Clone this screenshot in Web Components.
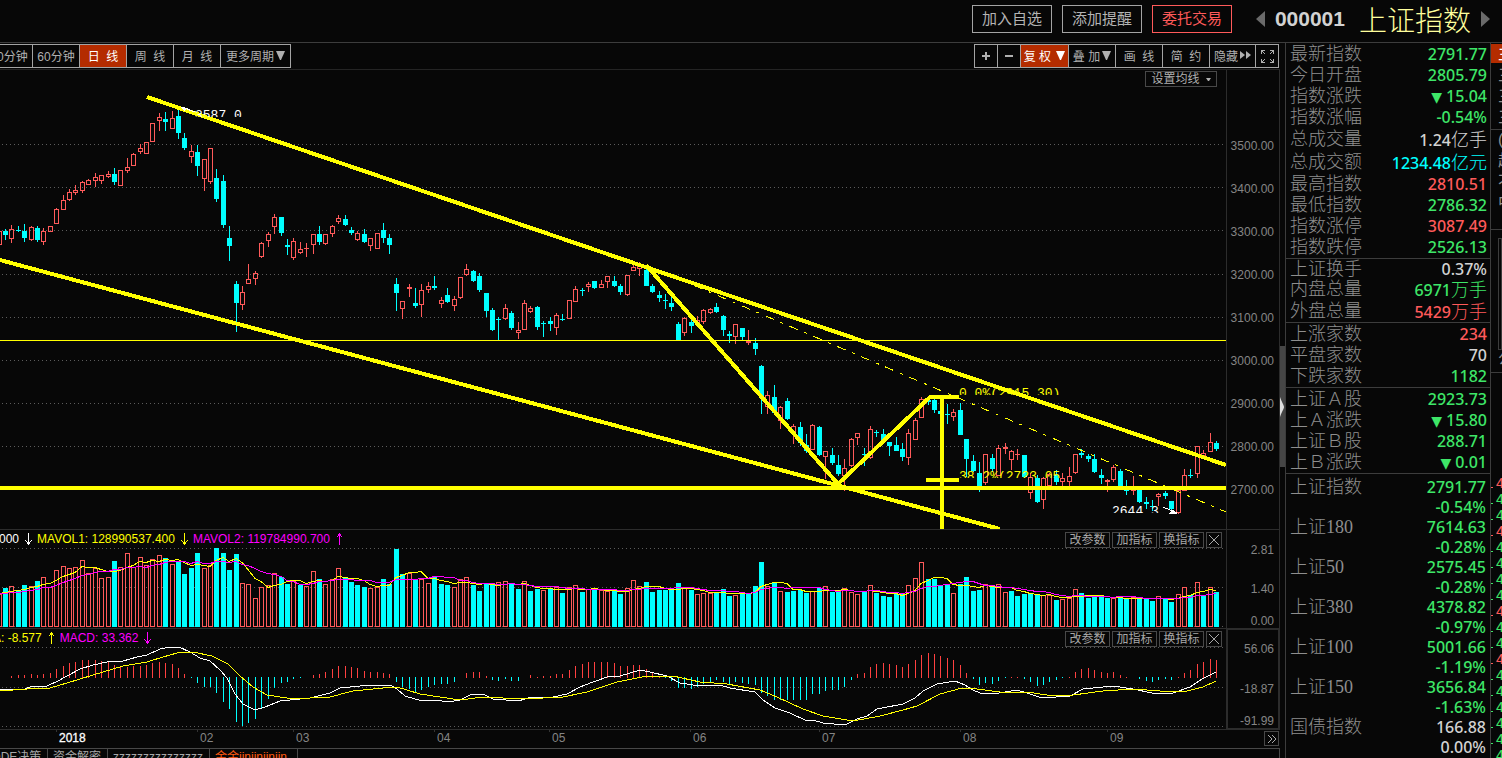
<!DOCTYPE html>
<html lang="zh-CN">
<head>
<meta charset="utf-8">
<title>上证指数 000001</title>
<style>
html,body{margin:0;height:100%;background:#070707}
body{overflow:hidden;font-family:"Liberation Sans","Noto Sans CJK SC",sans-serif}
</style>
</head>
<body>
<stock-terminal></stock-terminal>
<script>
const BASE = `*{box-sizing:border-box}
button{font:inherit;color:inherit;background:none;margin:0;padding:0;border:0;white-space:nowrap;cursor:pointer}
a{color:inherit;text-decoration:none}svg{display:block}`;

function define(name, css, html, setup) {
  const tpl = document.createElement('template');
  customElements.define(name, class extends HTMLElement {
    constructor() {
      super();
      tpl.innerHTML = `<style>${BASE}${css}</style>${typeof html === 'function' ? html(this) : html}`;
      this.attachShadow({mode: 'open'}).appendChild(tpl.content.cloneNode(true));
      if (setup) setup(this.shadowRoot, this);
    }
  });
}

/* candles: colour, high, body top, body bottom, low */
const CANDLES = `r231,231,245,245 c229,231,235,240 r225,229,239,243 c226,230,231,232 c224,231,238,242 r226,227,240,241 c226,228,240,242 r228,231,242,245 r226,226,232,232 r208,209,224,224
r195,200,210,210 r189,192,200,201 r185,190,193,195 r181,182,191,193 r179,180,185,185 r173,177,181,187 r175,175,181,184 r171,174,177,178 c168,174,182,185 r170,170,186,186
r158,167,171,173 r153,154,166,166 r144,148,152,154 r142,142,154,154 r123,123,142,142 r113,117,121,131 c112,119,122,131 r111,118,129,129 c109,116,133,139 c133,138,148,150
r145,151,157,163 c145,152,166,176 r159,159,179,191 r148,148,182,184 c169,178,199,202 c175,181,225,228 c226,238,246,261 c281,284,303,332 r286,292,305,310 r264,279,284,284
r271,273,279,285 r242,243,257,258 r232,234,241,247 r214,217,227,234 c217,217,233,236 c239,245,247,255 r238,241,258,260 r242,249,253,254 r243,248,249,257 r234,234,245,254
c226,234,242,245 r234,234,244,245 r225,226,234,237 r215,218,222,224 c215,219,225,226 c227,230,233,235 r231,233,240,241 c229,234,242,243 r238,238,246,251 r233,233,249,249
c223,230,238,243 c234,238,245,254 c278,284,293,311 r301,301,309,319 r284,287,289,297 c288,303,306,308 r284,290,305,317 r282,286,290,293 c276,286,288,290 r297,300,304,308
c288,295,302,303 r296,299,306,311 r277,277,298,299 r264,269,275,276 c270,271,281,282 c273,276,290,292 c293,293,311,317 c308,310,330,331 c317,319,320,340 r304,308,319,320
c311,313,328,330 r322,330,333,339 r300,303,330,330 r306,308,312,313 c306,307,327,330 c321,323,324,337 c317,321,324,331 r313,315,328,335 c314,319,320,321 r300,300,319,319
r286,289,302,302 c288,290,291,296 r282,284,287,292 c281,281,288,289 r280,284,288,288 r276,276,282,288 c276,281,286,287 c284,286,292,295 r275,275,295,296 r262,267,271,271
r262,266,269,276 c266,270,286,286 c284,286,292,293 c291,295,298,302 c294,300,301,309 c296,303,307,311 c322,324,340,340 r317,318,333,336 c318,322,326,333 r316,320,324,324
r309,310,322,324 r308,309,313,314 c303,307,312,313 c315,316,330,336 c331,334,336,343 r324,324,337,344 c328,328,337,340 r330,341,343,345 c338,343,349,355 c365,366,398,414
r391,395,407,414 c385,397,413,413 r406,407,421,429 c398,401,419,420 r424,426,433,444 c422,427,443,446 c434,445,451,453 r424,425,450,450 c426,427,455,456 r451,451,457,479
c448,455,463,465 c455,465,474,476 r459,468,476,491 r438,439,466,467 r433,433,438,445 c448,454,455,466 r426,429,458,459 c430,432,433,437 c429,434,441,442 c442,442,446,456
c437,445,451,451 c443,449,457,461 r429,433,458,465 r418,420,440,440 r397,399,418,418 c397,400,402,405 c399,400,410,413 c403,411,414,414 c404,414,415,424 r409,412,417,421
c403,410,435,435 c439,439,459,477 c455,461,471,472 c462,473,486,492 r454,454,483,485 c454,458,469,472 r445,448,476,476 r443,447,449,454 r450,451,460,470 r449,454,455,460
c455,455,477,478 r473,477,493,499 c475,478,502,503 r477,478,500,509 r473,474,486,486 c470,475,482,485 r473,478,482,487 r467,476,482,486 r454,454,473,474 c449,453,455,458
c454,456,459,462 c454,459,472,473 c469,475,478,484 r479,480,482,492 r465,467,480,482 c469,471,486,487 c480,486,491,495 r476,490,491,495 c490,490,502,503 c497,502,504,509
c500,506,507,511 r493,494,497,506 c491,493,496,499 c501,501,509,511 r490,490,513,514 r469,475,491,491 c469,475,476,478 r446,446,474,478 r450,453,456,457 r433,442,452,452 c441,443,449,451`.split(/\s+/);

/* volume bar tops on a base of 626 */
const VOLUME = `594r 588c 586r 591c 585c 586r 581c 577r 587r 570r 566r 568r 567r 560r 573r 568r 578r 577r 561c 567r 553r 567r 557r 565r 559r 555r 558c 564r 561c 574c
568c 553c 568r 565r 548c 553c 570c 554c 583r 584r 598r 587r 585r 573r 577c 584c 581r 585c 586r 571r 579c 584r 579r 568r 577c 582c 585c 587c 588r 587r
579c 584c 549c 574c 573r 580c 579r 583r 576c 584c 585c 587r 579r 577r 585c 591c 584c 584c 582r 581r 584c 589c 581r 591c 589c 590r 588c 587r 593c 587r
585r 592c 589r 589c 590r 591r 590c 594c 588r 580r 586r 582c 592c 590c 590c 589c 583c 588r 590c 594r 593r 593r 592c 589c 596c 595r 592c 593c 586c 562c
586r 583c 591r 592c 591c 590c 593c 591r 588c 586r 592c 591c 588r 592r 594r 592c 585r 593c 596c 597c 594c 594c 585r 578r 562r 579c 579c 586c 584c 593r
584c 577c 591c 590c 584r 586c 584r 592r 591c 596c 594c 593c 595c 595r 595r 600c 599r 598r 589r 593c 598c 596c 597c 598c 598r 597c 599c 597r 597c 598c
601c 596r 599c 602c 594r 587r 595c 582r 595c 587r 592c`.split(/\s+/);

const HIST = [0,0,2,3,3,4,3,4,5,9,12,15,16,18,18,18,17,16,13,12,11,12,12,13,15,16,15,14,10,4,-1,-6,-10,-10,-16,-25,-32,-45,-49,-46,-42,-31,-22,-11,-6,-5,-2,-1,0,3,4,6,9,12,12,11,10,7,6,6,5,4,-5,-10,-12,-15,-13,-10,-8,-7,-7,-5,0,5,6,6,2,-3,-4,-2,-4,-4,0,3,1,2,2,4,4,8,12,14,16,16,16,16,15,12,12,13,13,9,5,2,-1,-4,-11,-11,-12,-10,-7,-5,-3,-5,-7,-5,-6,-7,-8,-16,-19,-23,-23,-23,-23,-23,-23,-17,-17,-14,-13,-13,-10,-3,4,5,11,14,15,14,13,11,14,18,23,25,24,22,20,18,13,5,-2,-8,-6,-7,-4,-1,1,1,-2,-5,-9,-8,-5,-3,-1,1,6,9,10,8,6,5,6,3,1,0,-2,-4,-5,-3,-2,-3,1,5,8,14,16,19,18];

const DIF = '0,690 25,689 30,687 47,686 58,681 67,676 80,669 93,665 107,662 123,661 137,657 147,655 160,649 170,647 179,647 190,652 200,658 210,661 220,670 227,678 235,694 243,704 255,710 265,707 280,701 310,698 330,693 340,688 360,686 390,685 397,689 405,696 422,701 435,700 448,702 460,700 470,695 483,694 493,699 518,701 532,697 553,697 567,694 580,687 593,682 610,676 620,676 640,670 650,672 667,676 680,683 700,686 720,685 730,688 755,692 763,700 775,708 790,713 807,721 813,720 823,723 845,725 857,719 867,716 877,709 903,704 915,698 923,691 937,684 955,681 965,685 973,690 980,693 993,694 1017,690 1027,693 1042,698 1070,696 1083,689 1113,686 1133,689 1152,693 1173,693 1190,687 1202,679 1216,672';
const DEA = '0,691 27,689 50,688 67,683 80,679 103,672 123,666 147,662 163,657 177,653 193,652 212,656 228,664 240,676 253,687 267,695 287,698 310,698 330,697 353,691 383,688 397,687 420,694 460,700 483,697 523,699 563,697 587,692 617,682 647,676 673,676 700,682 727,684 760,690 777,697 803,709 823,716 853,721 880,716 903,710 917,706 940,694 962,688 977,689 1000,692 1027,692 1047,695 1073,695 1103,691 1133,689 1160,691 1187,691 1203,687 1216,681';

const RED = '#ff5a5a', CYAN = '#00ffff';
const xAt = k => Math.round(5 + 6.4074 * (k - 1));
const grid = ys => ys.map(y => `<path d="M2 ${y}.5H1226" stroke="#5c5c5c" stroke-dasharray="1 3"/>`).join('');
const plot = (top, h, body) => `<svg viewBox="0 ${top} 1226 ${h}" preserveAspectRatio="xMaxYMin slice" width="100%" height="${h}" fill="none" shape-rendering="crispEdges">${body}</svg>`;
const arrow = up => `<svg width="7" height="12" viewBox="0 0 7 12" fill="none" stroke="currentColor" shape-rendering="crispEdges"><path d="${up ? 'M3.5 1V12M.5 4.5L3.5 1 6.5 4.5' : 'M3.5 0V11M.5 7.5L3.5 11 6.5 7.5'}"/></svg>`;

define('app-header', `
:host{display:flex;align-items:center;justify-content:flex-end;height:43px;padding:0 12px 5px 0;border-bottom:1px solid #3c3c3c}
.acts{display:flex;gap:10px}
.acts button{width:80px;height:28px;border:1px solid #a4a4a4;color:#b4b4b4;font-size:15px;line-height:24px}
.acts .trade{border-color:${RED};color:${RED}}
.nav{margin-left:24px}.nav+.code{margin-left:10px}
.code{font-size:21px;font-weight:700;color:#d2d2d2}
.name{font-size:28px;line-height:36px;margin:0 10px 0 14px;color:#ffff9c;font-weight:300;font-family:"Noto Sans CJK SC",sans-serif}
.next{margin:0}`,
`<div class="acts"><button>加入自选</button><button>添加提醒</button><button class="trade">委托交易</button></div>
<button class="nav" aria-label="上一个"><svg width="9" height="16" viewBox="0 0 9 16"><path d="M9 0V16L0 8Z" fill="#6a6a6a"/></svg></button>
<span class="code">000001</span><span class="name">上证指数</span>
<button class="next" aria-label="下一个"><svg width="9" height="16" viewBox="0 0 9 16"><path d="M0 0V16L9 8Z" fill="#6a6a6a"/></svg></button>`);

const tri = `<svg class="t" width="9" height="9" viewBox="0 0 9 9"><path d="M0 0H9L5 9H4Z" fill="currentColor"/></svg>`;
define('chart-toolbar', `
:host{display:flex;justify-content:space-between;height:27px;padding:1px 0;border-bottom:1px solid #242424;color:#b0b0b0;font-size:12px}
div{display:flex}
button{display:flex;align-items:center;justify-content:center;gap:2px;height:24px;width:47px;padding-bottom:2px;border:1px solid #a4a4a4;border-left-width:0;white-space:pre}
.left button:first-child{margin-left:-14px}
.left button:last-child{width:70px}
.on{background:#b42c00;color:#fff}
.right{margin-right:1px}
.right button:first-child{border-left-width:1px;width:24px}
button.s{width:23px}button.w{width:48px}button.n{width:46px}
button.i{padding-bottom:0}`,
`<div class="left"><button>30分钟</button><button>60分钟</button><button class="on">日  线</button><button>周  线</button><button>月  线</button><button>更多周期${tri}</button></div>
<div class="right"><button class="i" aria-label="放大"><svg width="8" height="8" viewBox="0 0 8 8" shape-rendering="crispEdges"><path d="M3 0h2v3H8v2H5V8h-2V5H0v-2h3z" fill="currentColor"/></svg></button>
<button class="s i" aria-label="缩小"><svg width="8" height="2" viewBox="0 0 8 2"><path d="M0 0H8V2H0Z" fill="currentColor"/></svg></button>
<button class="on w">复 权 ${tri}</button><button>叠 加${tri}</button><button>画  线</button><button>简  约</button>
<button class="n">隐藏<svg width="11" height="8" viewBox="0 0 11 8"><path d="M0 0L5 4 0 8ZM6 0L11 4 6 8Z" fill="currentColor"/></svg></button>
<button class="s i" aria-label="全屏"><svg width="13" height="13" viewBox="0 0 13 13" fill="none" stroke="currentColor" shape-rendering="crispEdges"><path d="M.5 4V.5H4M.5 .5L4 4M9 .5H12.500V4M12.500 .5L9 4M.5 9V12.500H4M.5 12.500L4 9M12.500 9V12.500H9M12.500 12.500L9 9"/></svg></button></div>`);

define('chart-pane', `
:host{display:flex;border-bottom:1px solid #2c2c2c;position:relative}
.plot{flex:1;min-width:0;overflow:hidden}
.axis{width:54px;border-left:1px solid #2c2c2c;border-right:1px solid #2c2c2c;color:#858585;font-size:12px}
.head,.acts{position:absolute;top:2px}
.head{left:0}.acts{right:58px}`,
`<div class="plot"><slot></slot></div><div class="axis"><slot name="axis"></slot></div>
<div class="head"><slot name="head"></slot></div><div class="acts"><slot name="acts"></slot></div>`);

define('axis-labels', `
:host{display:block;text-align:right;padding-right:5px}
span{display:block}`, '', (root, el) => {
  el.getAttribute('values').split(' ').forEach(v => {
    const [text, h] = v.split('|'), s = document.createElement('span');
    s.textContent = text; s.style.cssText = `height:${h}px;line-height:${h}px`;
    root.appendChild(s);
  });
});

define('pane-actions', `
:host{display:flex;gap:2px;font-size:12px;color:#a8a8a8}
button{width:45px;height:16px;border:1px solid #484848;line-height:12px}
.x{width:16px;display:grid;place-items:center}`,
`<button>改参数</button><button>加指标</button><button>换指标</button><button class="x" aria-label="关闭"><svg width="10" height="10" viewBox="0 0 10 10" stroke="currentColor" shape-rendering="crispEdges"><path d="M0 0L10 10M10 0L0 10"/></svg></button>`);

define('ma-button', `
:host{display:block}
button{display:flex;align-items:center;justify-content:center;gap:6px;width:72px;height:16px;border:1px solid #484848;color:#b0b0b0;font-size:12px;line-height:12px}`,
`<button>设置均线<svg width="5" height="3" viewBox="0 0 5 3"><path d="M0 0H5L3 3H2Z" fill="currentColor"/></svg></button>`);

define('price-plot', `:host{display:block}text{font:13px "Liberation Mono",monospace}`, () => {
  const candles = CANDLES.map((s, k) => {
    const x = xAt(k), [h, t, b, l] = s.slice(1).split(',').map(Number);
    if (s[0] === 'c') return `<path d="M${x}.5 ${h}V${l}" stroke="${CYAN}"/><rect x="${x - 2}" y="${t}" width="5" height="${b - t}" fill="${CYAN}"/>`;
    const body = b - t < 3 ? `<rect x="${x - 2}" y="${t}" width="5" height="${b - t}" fill="${RED}"/>` : `<rect x="${x - 1.5}" y="${t + .5}" width="4" height="${b - t - 1}" stroke="${RED}"/>`;
    return `<path d="M${x + .5} ${h}V${t}M${x + .5} ${b}V${l}" stroke="${RED}"/>${body}`;
  }).join('');
  return plot(70, 459, `
  <defs><clipPath id="cut"><path d="M180 109H260V117H180ZM950 387H1070V395H950ZM950 470H1070V478H950ZM1100 506H1165V513H1100Z"/></clipPath></defs>
  ${grid([144, 187, 230, 274, 317, 360, 403, 446, 489])}${candles}
  <g stroke="#ffff00" stroke-width="4"><path d="M147 97L1226 465M0 260L1000 529M0 488H1226M646 265L838 484 930 397H959M926 480H959M942 397V529"/></g>
  <g stroke="#ffff00"><path d="M0 340.500H1226"/><path d="M646 265L1226 512" stroke-dasharray="9 7 3 7"/></g>
  <g clip-path="url(#cut)"><text x="195" y="119" fill="#fff">3587.0</text><text x="959" y="397" fill="#ff0">0.0%(2915.30)</text><text x="959" y="480" fill="#ff0">38.2%(2723.05</text><text x="1112" y="515" fill="#fff">2644.3</text></g>
  <path d="M181 107L195 112M1163 507L1177 513" stroke="#fff"/><path d="M181 107L189 108 184 111ZM1177 514L1169 514 1173 509Z" fill="#fff"/>`);
});

define('volume-plot', ':host{display:block}', () => {
  const tops = VOLUME.map(v => parseInt(v));
  const bars = VOLUME.map((v, k) => {
    const x = xAt(k), t = tops[k];
    return v.endsWith('c') ? `<rect x="${x - 2}" y="${t}" width="5" height="${627 - t}" fill="${CYAN}"/>` : `<path d="M${x - 2 + .5} ${t}.5h4V626.5h-4Z" stroke="${RED}"/>`;
  }).join('');
  const ma = n => tops.map((_, k) => {
    let s = 0;
    for (let j = k - n + 1; j <= k; j++) s += j < 0 ? 593 : tops[j];
    return `${xAt(k)},${Math.round(s / n) + .5}`;
  }).join(' ');
  return plot(530, 98, `${grid([548, 587, 626])}${bars}<polyline points="${ma(5)}" stroke="#ff0"/><polyline points="${ma(10)}" stroke="#f0f"/>`);
});

define('macd-plot', ':host{display:block}', () => {
  const bars = HIST.map((v, k) => v ? `<rect x="${xAt(k)}" y="${v > 0 ? 678 - v : 677}" width="1" height="${Math.abs(v)}" fill="${v > 0 ? '#ff4040' : CYAN}"/>` : '').join('');
  return plot(629, 100, `${grid([647, 687, 726])}${bars}<polyline points="${DIF}" stroke="#fff"/><polyline points="${DEA}" stroke="#ff0"/>`);
});

define('legend-line', `
:host{display:flex;align-items:center;gap:5px;height:14px;margin-left:-1px;font-size:12px;white-space:pre}
:host([cut]){margin-left:-7px}
span{display:flex;align-items:center;gap:6px}`, el => {
  const cols = {w: '#fff', y: '#ff0', m: '#f0f'};
  return el.getAttribute('items').split('|').map(s => `<span style="color:${cols[s[0]]}">${s.slice(2)}${arrow(s[1] === '+')}</span>`).join('');
});

define('time-axis', `
:host{display:flex;height:18px}
.plot{flex:1;min-width:0}
.end{width:54px;display:flex;justify-content:flex-end;align-items:flex-start;padding:1px 1px 0 0}
button{width:15px;height:15px;border:1px solid #484848;color:#aaa;display:grid;place-items:center}
text{font:12px "Liberation Sans",sans-serif;fill:#858585}`, () => {
  const marks = [[56, '2018'], [197, '02'], [293, '03'], [434, '04'], [549, '05'], [690, '06'], [819, '07'], [960, '08'], [1107, '09']];
  return `<div class="plot">${plot(730, 18, marks.map(([x, t], k) => `<path d="M${x}.5 730V732" stroke="#333"/><text x="${x + 3}" y="742"${k ? '' : ' style="fill:#fff;stroke:#fff;stroke-width:.3"'}>${t}</text>`).join(''))}</div>
  <div class="end"><button aria-label="更多"><svg width="8" height="8" viewBox="0 0 8 8" fill="none" stroke="currentColor"><path d="M0 0L4 4 0 8M4 0L8 4 4 8"/></svg></button></div>`;
});

define('bottom-tabs', `
:host{display:flex;flex:1;min-height:10px;overflow:hidden;border:1px solid #484848;border-width:1px 1px 0 0;font-size:12px;color:#a8a8a8}
a{height:20px;line-height:16px;padding:0 5px;border-right:1px solid #484848;white-space:nowrap}
.first{width:56px;margin-left:-8px;padding:0}.two{width:60px}.three{width:102px}.hot{width:88px;color:#ff5a10}`,
`<a class="first" href="#">DDE决策</a><a class="two" href="#">资金解密</a><a class="three" href="#">zzzzzzzzzzzzzzz</a><a class="hot" href="#">金金jinjinjinjin</a>`);

define('panel-grip', `
:host{display:block;width:5px;flex:none}
button{display:flex;align-items:center;width:5px;height:121px;margin-top:303px;background:#464646}`,
`<button aria-label="收起"><svg width="5" height="20" viewBox="0 0 5 20"><path d="M0 0C2 6 4 8 4 10C4 12 2 14 0 20Z" fill="#e0e0e0"/></svg></button>`);

define('quote-panel', `
:host{display:block;width:206px;flex:none;border:1px solid #3c3c3c;border-width:0 1px;overflow:hidden;font-family:"Noto Sans","Noto Sans CJK SC",sans-serif}
table{width:100%;border-collapse:collapse}
th,td{padding:0;line-height:18px}
th{text-align:left;padding-left:4px;font:300 18px/18px "Liberation Serif","Noto Sans CJK SC",sans-serif;color:#8e8e8e;white-space:nowrap}
td{text-align:right;padding-right:3px;font-size:16px;font-weight:500;white-space:nowrap}
i{font:300 18px/18px "Noto Sans CJK SC",sans-serif}
b{font:14px/14px "DejaVu Sans",sans-serif;margin-right:4px}
.sep{border-bottom:1px solid #3c3c3c}
.g{color:#3ee668}.r{color:${RED}}.w{color:#d2d2d2}.c{color:${CYAN}}
.h215{height:215px}.h64{height:63px}.h65{height:64px}.h85{height:85px}
.last{margin-top:3px}.last tr{height:20px}.last td{padding-right:4px}`, () => {
  const groups = [
    ['h215', ['最新指数 g2791.77', '今日开盘 g2805.79', '指数涨跌 g▼15.04', '指数涨幅 g-0.54%', '总成交量 w1.24亿手', '总成交额 c1234.48亿元', '最高指数 r2810.51', '最低指数 g2786.32', '指数涨停 r3087.49', '指数跌停 g2526.13']],
    ['h64', ['上证换手 w0.37%', '内盘总量 g6971万手', '外盘总量 r5429万手']],
    ['h65', ['上涨家数 r234', '平盘家数 w70', '下跌家数 g1182']],
    ['h85', ['上证Ａ股 g2923.73', '上Ａ涨跌 g▼15.80', '上证Ｂ股 g288.71', '上Ｂ涨跌 g▼0.01']]
  ];
  const row = s => {
    const [a, v] = s.split(' ');
    return `<tr><th scope="row">${a}</th><td class="${v[0]}">${v.slice(1).replace('▼', '<b>▼</b>').replace(/[亿万][手元]/, '<i>$&</i>')}</td></tr>`;
  };
  const idx = [['上证指数', '2791.77', '-0.54%'], ['上证180', '7614.63', '-0.28%'], ['上证50', '2575.45', '-0.28%'], ['上证380', '4378.82', '-0.97%'], ['上证100', '5001.66', '-1.19%'], ['上证150', '3656.84', '-1.63%'], ['国债指数', '166.88', '0.00%']];
  return groups.map(([h, rows]) => `<div class="sep"><table class="${h}"><tbody>${rows.map(row).join('')}</tbody></table></div>`).join('') +
    `<table class="last"><tbody>${idx.map(([n, v, p]) => { const c = p[0] === '-' ? 'g' : 'w'; return `<tr><th scope="row">${n}</th><td class="${c}">${v}</td></tr><tr><td></td><td class="${c}">${p}</td></tr>`; }).join('')}</tbody></table>`;
});

define('edge-column', `
:host{display:block;width:11px;flex:none;overflow:hidden;font-size:16px;color:#909090}
.tab{display:block;width:30px;height:19px;margin-top:1px;background:#b42c00;color:#fff;text-align:left;padding-left:7px;line-height:16px}
.list{height:167px;padding:3px 0 0 7px;white-space:nowrap;overflow:hidden;border-bottom:1px solid #3c3c3c}
.list span{display:block;height:21px;line-height:20px}
.list .rule{border-bottom:1px solid #3c3c3c;height:22px;margin-left:-7px;padding-left:7px}
.box{height:112px;margin:8px 0 0 7px;border:1px solid #3c3c3c}
.foot{height:23px;border-bottom:1px solid #3c3c3c;padding-left:7px;line-height:18px}
.ticks{margin-top:102px}
.ticks span{display:flex;gap:3px;height:16px;font-size:14px;line-height:16px;align-items:center}
.ticks span::before{content:"";width:2px;height:1px;background:currentColor;flex:none;margin-top:8px}
.g{color:#3ee668}.r{color:${RED}}`,
() => `<button class="tab">主</button>
<div class="list"><span>三</span><span>三</span><span class="rule">三</span><span>(</span><span>超</span><span>不</span><span>中</span></div>
<div class="box"></div><div class="foot">公</div>
<div class="ticks">${[...'rggrggggrggrgggggg'].map(c => `<span class="${c}">4</span>`).join('')}</div>`);

define('stock-terminal', `
:host{display:flex;flex-direction:column;height:100vh;overflow:hidden;background:#070707}
main{display:flex;flex:1;min-height:0}
.work{flex:1;min-width:0;display:flex;flex-direction:column;overflow:hidden}
.price{height:460px}.vol{height:99px}.macd{height:101px}
.p{padding-top:55px}.v{padding-top:9px}
.m{height:100%;border:1px solid #2c2c2c;padding-top:8px;padding-right:4px}
ma-button{margin:-1px 5px 0 0}`,
`<app-header></app-header>
<main>
<section class="work">
<chart-toolbar></chart-toolbar>
<chart-pane class="price"><price-plot></price-plot><axis-labels class="p" slot="axis" values="3500.00|43 3400.00|43 3300.00|43 3200.00|43 3100.00|43 3000.00|43 2900.00|43 2800.00|43 2700.00|43"></axis-labels><ma-button slot="acts"></ma-button></chart-pane>
<chart-pane class="vol"><volume-plot></volume-plot><axis-labels class="v" slot="axis" values="2.81|22 1.40|56 0.00|8"></axis-labels><legend-line slot="head" items="w-000|y-MAVOL1: 128990537.400|m+MAVOL2: 119784990.700"></legend-line><pane-actions slot="acts"></pane-actions></chart-pane>
<chart-pane class="macd"><macd-plot></macd-plot><axis-labels class="m" slot="axis" values="56.06|22 -18.87|58 -91.99|6"></axis-labels><legend-line cut slot="head" items="y+A: -8.577|m-MACD: 33.362"></legend-line><pane-actions slot="acts"></pane-actions></chart-pane>
<time-axis></time-axis>
<bottom-tabs></bottom-tabs>
</section>
<panel-grip></panel-grip>
<quote-panel></quote-panel>
<edge-column></edge-column>
</main>`);
</script>
</body>
</html>
